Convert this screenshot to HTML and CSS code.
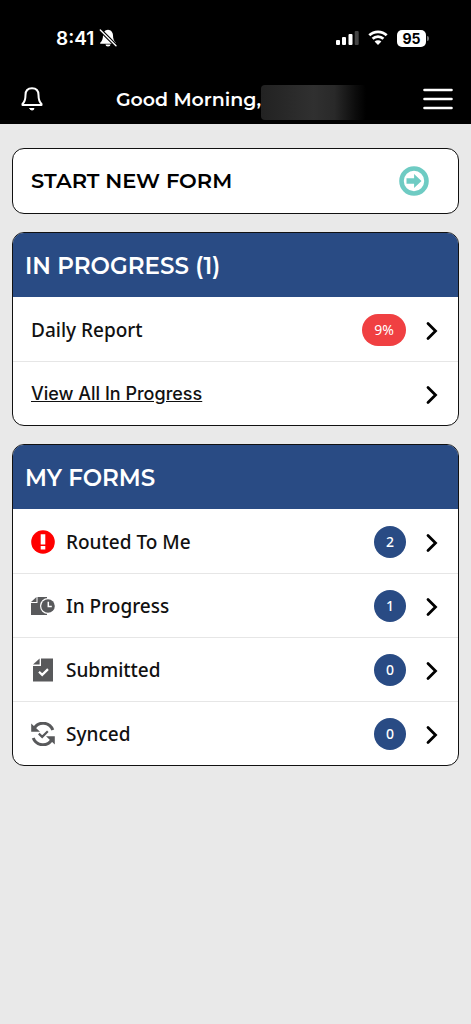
FILE: index.html
```html
<!DOCTYPE html>
<html lang="en">
<head>
<meta charset="utf-8">
<meta name="viewport" content="width=device-width, initial-scale=1">
<title>Forms</title>
<link rel="stylesheet" href="styles.css">
</head>
<body>
<svg class="defs" aria-hidden="true">
  <symbol id="chevron" viewBox="0 0 12 20"><path d="M2 2.500 9.500 10 2 17.500" fill="none" stroke="#000" stroke-width="2.800" stroke-linecap="round" stroke-linejoin="miter"/></symbol>
</svg>
<header class="top">
  <div class="status">
    <div class="clock">
      <span>8:41</span>
      <svg width="18" height="18" viewBox="0 0 18 18" aria-hidden="true">
        <path d="M9 .8C6 1 4 3.500 4 6.500c0 3.500-1 5.500-2.800 7.300v.9h15.600v-.9C15 12 14 10 14 6.500 14 3.500 12 1 9 .8zM6.500 15.500a2.500 2 0 0 0 5 0z" fill="#fff"/>
        <path d="M1.500 1.200 17 16.700" stroke="#000" stroke-width="3.600"/>
        <path d="M1.300 1 17 16.700" stroke="#fff" stroke-width="1.400" stroke-linecap="round"/>
      </svg>
    </div>
    <div class="signals">
      <svg width="23" height="16" viewBox="0 0 23 16" aria-hidden="true">
        <g fill="#fff"><rect y="10" width="4" height="5" rx="1"/><rect x="6" y="7" width="4" height="8" rx="1"/><rect x="12.500" y="4" width="4" height="11" rx="1"/></g>
        <rect x="18.700" y="1" width="4" height="14" rx="1" fill="#444"/>
      </svg>
      <svg width="20" height="16" viewBox="0 0 20 16" aria-hidden="true">
        <path d="M1.300 5.300a12.500 12.500 0 0 1 17.400 0M4.600 8.800a7.700 7.700 0 0 1 10.800 0" fill="none" stroke="#fff" stroke-width="2.700"/>
        <path d="M10 15 6.600 11.600a4.800 4.800 0 0 1 6.800 0z" fill="#fff"/>
      </svg>
      <div class="battery"><span class="level">95</span><span class="cap"></span></div>
    </div>
  </div>
  <div class="nav">
    <button class="icon-button" type="button" aria-label="Notifications">
      <svg width="22" height="24" viewBox="0 0 22 24" fill="none" stroke="#fff" stroke-width="2" stroke-linejoin="round" stroke-linecap="round" aria-hidden="true">
        <path d="M11 1.200C6.800 1.200 4.500 4 4.500 8c0 5-1 7-3 9v1h19v-1c-2-2-3-4-3-9 0-4-2.300-6.800-6.500-6.800z"/>
        <path d="M9 21.500h4a2 1.500 0 0 1-4 0z" fill="#fff" stroke-width="1"/>
      </svg>
    </button>
    <p class="greeting"><span>Good Morning,</span><span class="hidden-name"></span></p>
    <button class="icon-button" type="button" aria-label="Menu">
      <svg width="30" height="22" viewBox="0 0 30 22" stroke="#fff" stroke-width="2.600" stroke-linecap="round" aria-hidden="true"><path d="M1.500 2h27M1.500 11h27M1.500 20h27"/></svg>
    </button>
  </div>
</header>
<main class="content">
  <button class="card start" type="button">
    <span>START NEW FORM</span>
    <svg width="30" height="30" viewBox="0 0 30 30" aria-hidden="true">
      <circle cx="15" cy="15" r="12.500" fill="none" stroke="#6ecbc3" stroke-width="4.600"/>
      <path d="M7.500 12.300h7.600V8l7.400 7-7.400 7v-4.300H7.500z" fill="#6ecbc3"/>
    </svg>
  </button>

  <section class="card">
    <h2 class="card-title">IN PROGRESS (1)</h2>
    <ul class="rows">
      <li><a class="row" href="#"><span class="label">Daily Report</span><span class="badge percent">9%</span><svg class="chevron"><use href="#chevron"/></svg></a></li>
      <li><a class="row" href="#"><span class="label view-all">View All In Progress</span><svg class="chevron"><use href="#chevron"/></svg></a></li>
    </ul>
  </section>

  <section class="card">
    <h2 class="card-title">MY FORMS</h2>
    <ul class="rows">
      <li><a class="row" href="#">
        <svg class="row-icon" viewBox="0 0 24 24" aria-hidden="true"><circle cx="12" cy="12" r="11.800" fill="#f00"/><path d="M9.700 4.200h4.600v10.300H9.700zM9.700 16h4.600v3.600H9.700z" fill="#fff"/></svg>
        <span class="label">Routed To Me</span><span class="badge">2</span><svg class="chevron"><use href="#chevron"/></svg></a></li>
      <li><a class="row" href="#">
        <svg class="row-icon" viewBox="0 0 24 24" aria-hidden="true">
          <path d="M6.500 3H16v18H0V9h6.500z" fill="#58595b"/><path d="M0 8 5.500 3v5z" fill="#58595b"/>
          <circle cx="17" cy="12" r="8" fill="#fff"/><circle cx="17" cy="12" r="6.800" fill="#58595b"/>
          <path d="M17.300 7.800v4.700h3.500" fill="none" stroke="#fff" stroke-width="1.500"/>
        </svg>
        <span class="label">In Progress</span><span class="badge">1</span><svg class="chevron"><use href="#chevron"/></svg></a></li>
      <li><a class="row" href="#">
        <svg class="row-icon" viewBox="0 0 24 24" aria-hidden="true">
          <path d="M10 .5h12v23H2V8h8z" fill="#58595b"/><path d="M2 6.600 8.600.5v6.100z" fill="#58595b"/>
          <path d="m8 13.700 3.200 3.200 5.800-5.800" fill="none" stroke="#fff" stroke-width="2.200"/>
        </svg>
        <span class="label">Submitted</span><span class="badge">0</span><svg class="chevron"><use href="#chevron"/></svg></a></li>
      <li><a class="row" href="#">
        <svg class="row-icon" viewBox="0 0 24 24" aria-hidden="true">
          <g fill="none" stroke="#58595b"><path d="M3.500 6C7.500-.8 18.500-.5 21.800 8M20.500 18C16.500 24.800 5.500 24.500 2.200 16" stroke-width="3"/><path d="m7.800 11.600 3.400 3.300 5.600-5.600" stroke-width="2.200"/></g>
          <path d="M.2 1.500v8.300H9zM23.800 22.500v-8.300H15z" fill="#58595b"/>
        </svg>
        <span class="label">Synced</span><span class="badge">0</span><svg class="chevron"><use href="#chevron"/></svg></a></li>
    </ul>
  </section>
</main>
</body>
</html>
```

FILE: styles.css
```css
* {
  box-sizing: border-box;
}

body {
  margin: 0;
  min-height: 100vh;
  background: #e9e9e9;
  color: #111;
  font-family: "Noto Sans", sans-serif;
}

button {
  padding: 0;
  border: 0;
  background: none;
  color: inherit;
  cursor: pointer;
}

svg {
  display: block;
  flex: none;
}

.defs {
  display: none;
}

.top {
  background: #000;
  color: #fff;
}

.status {
  display: flex;
  align-items: center;
  justify-content: space-between;
  height: 74px;
  padding: 2px 42px 0 56px;
  font-family: Inter, sans-serif;
}

.clock {
  display: flex;
  align-items: center;
  gap: 5px;
  font-size: 19px;
  font-weight: 600;
}

.signals {
  display: flex;
  align-items: center;
  gap: 9px;
}

.battery {
  display: flex;
  align-items: center;
  gap: 1px;
}

.level {
  width: 29px;
  border-radius: 5px;
  background: #fff;
  color: #000;
  font-size: 14px;
  font-weight: 700;
  line-height: 17px;
  text-align: center;
}

.cap {
  width: 2px;
  height: 5px;
  border-radius: 0 2px 2px 0;
  background: #777;
}

.nav {
  display: flex;
  align-items: center;
  justify-content: space-between;
  height: 50px;
  padding: 0 18px 0 21px;
}

.greeting {
  display: flex;
  align-items: center;
  margin: 0;
  padding-left: 16px;
  font-family: Montserrat, Inter, sans-serif;
  font-size: 19px;
  font-weight: 600;
}

.hidden-name {
  width: 105px;
  height: 35px;
  margin-top: 6px;
  border-radius: 4px;
  background: linear-gradient(90deg, #222, #303030 50%, #292929 70%, #0c0c0c 90%, #000);
}

.content {
  display: flex;
  flex-direction: column;
  gap: 18px;
  padding: 24px 12px;
}

.card {
  overflow: hidden;
  border: 1px solid #111;
  border-radius: 12px;
  background: #fff;
}

.start {
  display: flex;
  align-items: center;
  justify-content: space-between;
  padding: 17px 29px 17px 18px;
  color: #000;
  font-family: Montserrat, Inter, sans-serif;
  font-size: 21px;
  font-weight: 600;
  line-height: 30px;
}

.card-title {
  margin: 0;
  padding: 18px 12px 16px;
  background: #294b84;
  color: #fff;
  font-family: Montserrat, Inter, sans-serif;
  font-size: 23px;
  font-weight: 600;
  line-height: 30px;
}

.rows {
  margin: 0;
  padding: 0;
  list-style: none;
}

.rows li + li {
  border-top: 1px solid #e6e6e6;
}

.row {
  display: flex;
  align-items: center;
  height: 64px;
  padding: 2px 20px 0 18px;
  color: inherit;
  font-size: 19px;
  font-weight: 500;
  text-decoration: none;
}

.rows li + li .row {
  height: 63px;
  padding-top: 0;
}

.row-icon {
  width: 24px;
  height: 24px;
  margin-right: 11px;
}

.label {
  flex: 1;
}

.view-all {
  font-family: Inter, sans-serif;
  font-size: 18px;
  font-weight: 500;
  text-decoration: underline;
}

.badge {
  min-width: 32px;
  border-radius: 16px;
  background: #294b84;
  color: #fff;
  font-size: 14px;
  line-height: 32px;
  text-align: center;
}

.percent {
  min-width: 44px;
  background: #f04042;
  font-weight: 400;
}

.chevron {
  width: 12px;
  height: 20px;
  margin: 2px 0 0 20px;
}
```
